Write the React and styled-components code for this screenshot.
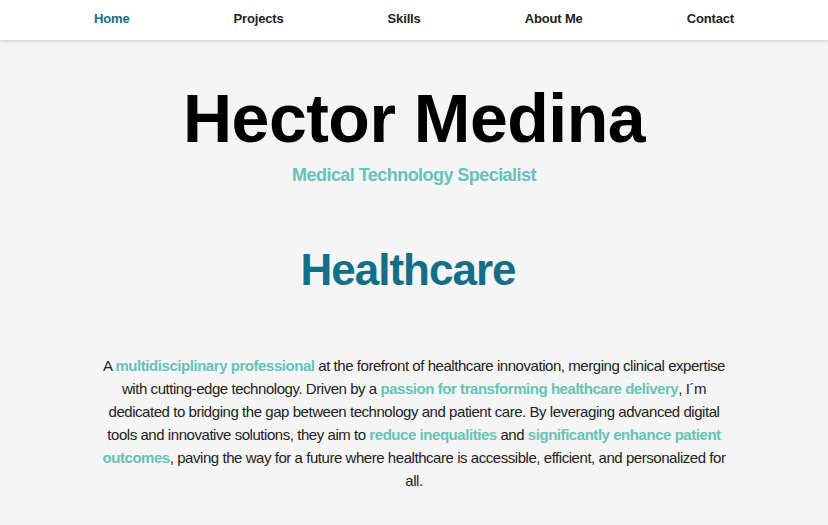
import React from "react";
import styled, { createGlobalStyle } from "styled-components";

const Global = createGlobalStyle`
  html, body { margin: 0; padding: 0; }
  body {
    background: #f5f5f5;
    font-family: "Liberation Sans", Arial, sans-serif;
    color: #222;
  }
`;

const Nav = styled.nav`
  height: 40px;
  box-sizing: border-box;
  padding-bottom: 4px;
  background: #fff;
  box-shadow: 0 1px 3px rgba(0,0,0,0.18);
  display: flex;
  justify-content: center;
  align-items: center;
  gap: 104px;
`;

const NavLink = styled.a`
  font-size: 13px;
  font-weight: 700;
  letter-spacing: -0.15px;
  color: ${p => (p.$active ? "#136f87" : "#222")};
  text-decoration: none;
  cursor: pointer;
`;

const Main = styled.main`
  display: flex;
  flex-direction: column;
  align-items: center;
  text-align: center;
`;

const Name = styled.h1`
  margin: 38px 0 0;
  font-size: 68px;
  line-height: 80px;
  font-weight: 700;
  letter-spacing: -0.5px;
  color: #000;
`;

const Subtitle = styled.h2`
  margin: 6px 0 0;
  font-size: 18px;
  line-height: 22px;
  font-weight: 700;
  letter-spacing: -0.55px;
  color: #67c3b3;
`;

const Section = styled.h2`
  margin: 58px 12px 0 0;
  font-size: 44px;
  line-height: 52px;
  font-weight: 700;
  letter-spacing: -1px;
  color: #136f87;
`;

const Para = styled.p`
  margin: 58px 0 0;
  width: 634px;
  font-size: 15px;
  line-height: 23px;
  letter-spacing: -0.45px;
  color: #222;
`;

const Hl = styled.strong`
  color: #67c3b3;
  font-weight: 700;
`;

export default function App() {
  const links = ["Home", "Projects", "Skills", "About Me", "Contact"];
  return (
    <>
      <Global />
      <Nav>
        {links.map((l, i) => (
          <NavLink key={l} $active={i === 0}>{l}</NavLink>
        ))}
      </Nav>
      <Main>
        <Name>Hector Medina</Name>
        <Subtitle>Medical Technology Specialist</Subtitle>
        <Section>Healthcare</Section>
        <Para>
          A <Hl>multidisciplinary professional</Hl> at the forefront of healthcare innovation, merging clinical expertise with cutting-edge technology. Driven by a <Hl>passion for transforming healthcare delivery</Hl>, I´m dedicated to bridging the gap between technology and patient care. By leveraging advanced digital tools and innovative solutions, they aim to <Hl>reduce inequalities</Hl> and <Hl>significantly enhance patient outcomes</Hl>, paving the way for a future where healthcare is accessible, efficient, and personalized for all.
        </Para>
      </Main>
    </>
  );
}
